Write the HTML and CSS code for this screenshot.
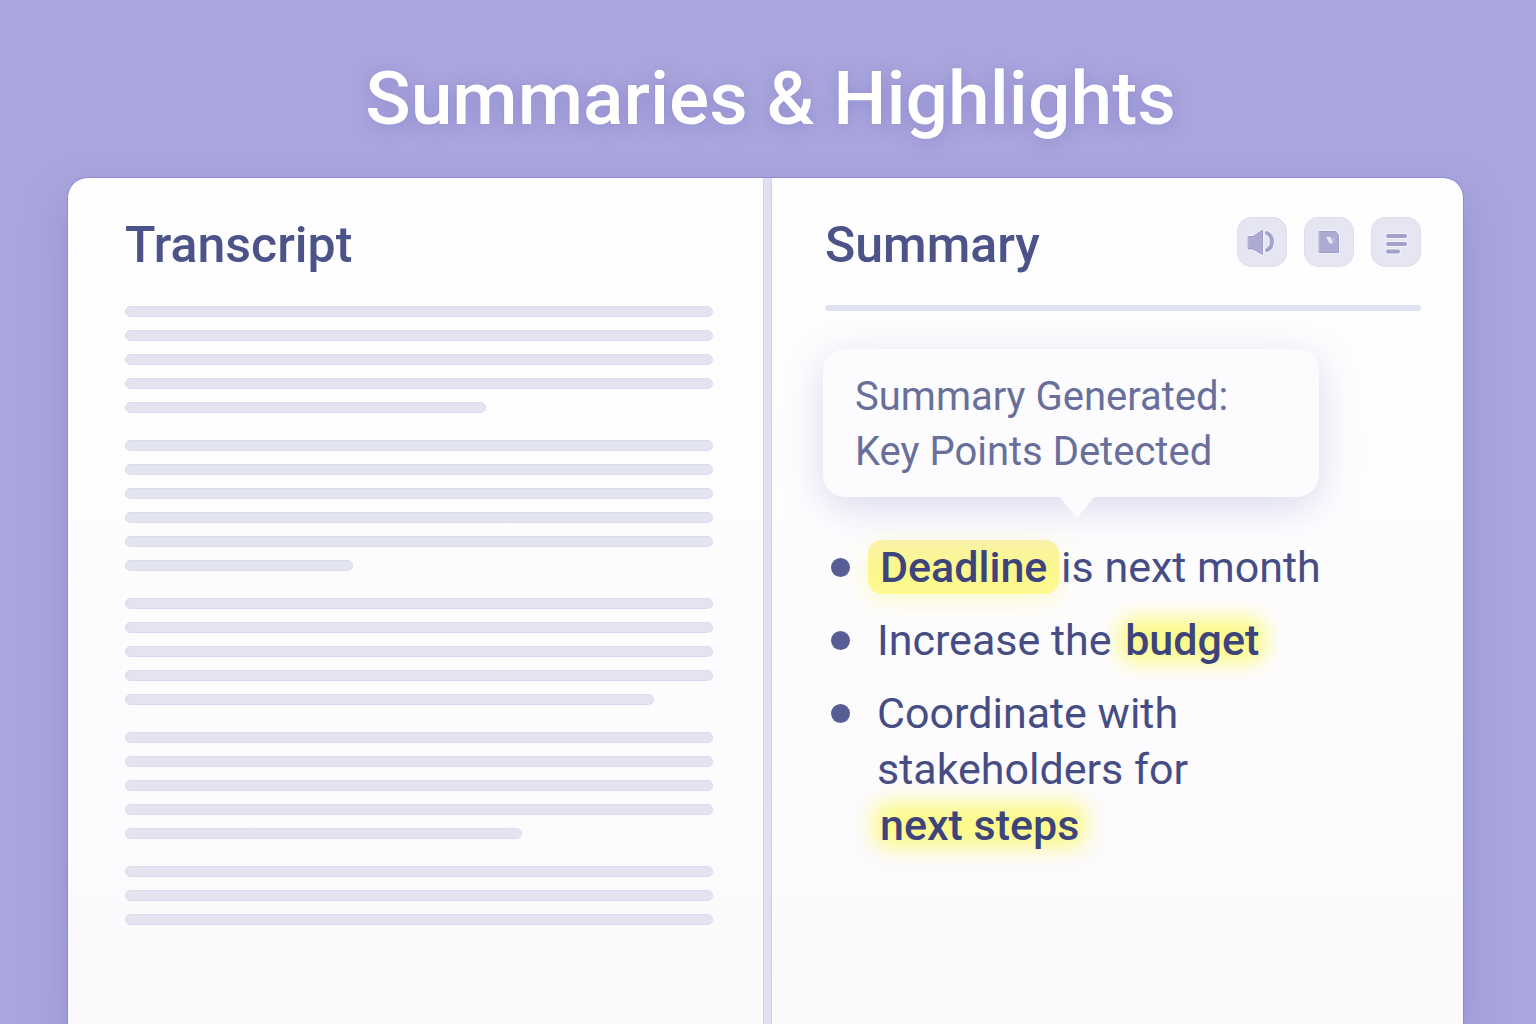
FILE: index.html
```html
<!DOCTYPE html>
<html lang="en">
<head>
<meta charset="utf-8">
<meta name="viewport" content="width=device-width, initial-scale=1">
<title>Summaries &amp; Highlights</title>
<link rel="stylesheet" href="styles.css">
</head>
<body>
<header class="page-header"><h1 class="page-title">Summaries &amp; Highlights</h1></header>
<main class="panel">
  <section class="column transcript" aria-labelledby="transcript-title">
    <div class="column-head"><h2 class="column-title" id="transcript-title">Transcript</h2></div>
    <div class="paragraphs" aria-hidden="true">
      <div class="paragraph"><span class="line"></span><span class="line"></span><span class="line"></span><span class="line"></span><span class="line" style="width:61.4%"></span></div>
      <div class="paragraph"><span class="line"></span><span class="line"></span><span class="line"></span><span class="line"></span><span class="line"></span><span class="line" style="width:38.8%"></span></div>
      <div class="paragraph"><span class="line"></span><span class="line"></span><span class="line"></span><span class="line"></span><span class="line" style="width:90%"></span></div>
      <div class="paragraph"><span class="line"></span><span class="line"></span><span class="line"></span><span class="line"></span><span class="line" style="width:67.5%"></span></div>
      <div class="paragraph"><span class="line"></span><span class="line"></span><span class="line"></span></div>
    </div>
  </section>
  <div class="divider"></div>
  <section class="column summary" aria-labelledby="summary-title">
    <div class="column-head">
      <h2 class="column-title" id="summary-title">Summary</h2>
      <div class="actions">
        <button class="action" type="button" aria-label="Listen">
          <svg viewBox="0 0 50 50" width="50" height="50">
            <path class="halo" d="M11.5 19.5H16L25.500 13v24.500L16 32h-4.500z"/>
            <path class="halo-line" d="M30 16c6.500 3 6.500 14 0 17"/>
            <path class="fill" d="M11.5 19.5H16L25.500 13v24.500L16 32h-4.500z"/>
            <path class="curve" d="M30 16c6.500 3 6.500 14 0 17"/>
          </svg>
        </button>
        <button class="action" type="button" aria-label="Open document">
          <svg viewBox="0 0 50 50" width="50" height="50">
            <path class="halo" d="M15.500 14.500H30c3 0 4.500 3 4.500 6.500v14.500h-19z"/>
            <path class="fill" d="M15.500 14.500H30c3 0 4.500 3 4.500 6.500v14.500h-19z"/>
            <path class="shine" d="M22.500 20c4-1 6 1 6 7-3 0-5-3-6-7z"/>
            <path class="shine-soft" d="M29 20c2 1 2 5 1 7z"/>
          </svg>
        </button>
        <button class="action" type="button" aria-label="Show notes">
          <svg viewBox="0 0 50 50" width="50" height="50">
            <path class="halo-line" d="M17 19h17M17 27h17M17 34.500h10"/>
            <path class="bars" d="M17 19h17M17 27h17M17 34.500h10"/>
          </svg>
        </button>
      </div>
    </div>
    <hr class="rule">
    <div class="callout" role="status">Summary Generated:<br>Key Points Detected
      <svg class="callout-tip" viewBox="0 0 36 22" width="36" height="22" aria-hidden="true"><path d="M0 0h36L19 21q-1 1-2 0z"/></svg>
    </div>
    <ul class="points">
      <li class="point"><span><mark class="pill">Deadline</mark> is next month</span></li>
      <li class="point"><span>Increase the <mark class="glow">budget</mark></span></li>
      <li class="point"><span>Coordinate with<br>stakeholders for<br><mark class="glow">next steps</mark></span></li>
    </ul>
  </section>
</main>
</body>
</html>
```
FILE: styles.css
```css
* { box-sizing: border-box; }

body {
  margin: 0;
  min-height: 100vh;
  display: flex;
  flex-direction: column;
  font-family: Roboto, "Liberation Sans", sans-serif;
  color: #4b5389;
  background: #a9a6dd;
}

h1, h2, ul { margin: 0; padding: 0; font-weight: 500; }

.page-header { padding: 53px 68px 35px 73px; }

.page-title {
  font-size: 75px;
  line-height: 90px;
  text-align: center;
  color: #fff;
  text-shadow: 0 0 1px #8079c8, 0 3px 18px rgba(94, 84, 176, 0.32);
}

.panel {
  flex: 1;
  display: grid;
  grid-template-columns: minmax(0, 695fr) 9px minmax(0, 691fr);
  margin: 0 73px 0 68px;
  border-radius: 20px 20px 0 0;
  background: linear-gradient(#fefefe, #fefdfe 40%, #fbf9fc);
  box-shadow: 0 0 0 1px #8f88d4, 0 20px 44px rgba(92, 82, 176, 0.28);
}

.column { padding: 39px 50px 98px 57px; }
.summary { padding: 39px 42px 98px 53px; isolation: isolate; }

.divider {
  background: #dfe0f1;
  border: solid #d2d4ec;
  border-width: 0 1px;
}

.column-head {
  display: flex;
  justify-content: space-between;
  align-items: flex-start;
  height: 56px;
  margin-bottom: 33px;
}

.summary .column-head { margin-bottom: 32px; }

.column-title { font-size: 50px; line-height: 56px; }

.paragraphs { display: flex; flex-direction: column; gap: 27px; }
.paragraph { display: flex; flex-direction: column; gap: 13px; }

.line {
  height: 11px;
  border-radius: 6px;
  background: #e4e4f1;
  border: 1px solid #dadbf0;
}

.actions { display: flex; gap: 17px; }

.action {
  width: 50px;
  height: 50px;
  padding: 0;
  border: 0;
  border-radius: 15px;
  background: #e6e6f3;
  box-shadow: inset 0 0 0 1px #dddef1;
}

.action svg { display: block; fill: none; stroke-linecap: round; stroke-linejoin: round; }
.action .fill { fill: #acacd2; stroke: #9d9dca; stroke-width: 1; }
.action .halo { stroke: #f3f3fb; stroke-width: 3; }
.action .halo-line { stroke: #f3f3fb; stroke-width: 6; }
.action .curve { stroke: #a3a3cd; stroke-width: 4; }
.action .bars { stroke: #a1a1cb; stroke-width: 4; }
.action .shine { fill: #e9e7f2; }
.action .shine-soft { fill: #c6c5df; }

.rule {
  height: 6px;
  margin: 0 0 38px;
  border: 0;
  border-radius: 3px;
  background: #e0e1f1;
}

.callout {
  position: relative;
  width: fit-content;
  margin-left: -2px;
  padding: 20px 91px 18px 32px;
  border-radius: 22px;
  background: #fcfcfe;
  color: #686f9b;
  font-size: 40px;
  line-height: 55px;
  box-shadow: 0 10px 40px rgba(110, 115, 200, 0.26);
}

.callout-tip {
  position: absolute;
  top: 100%;
  left: 236px;
  margin-top: -1px;
  fill: #fcfcfe;
}

.points {
  display: flex;
  flex-direction: column;
  gap: 17px;
  margin-top: 42px;
  padding-left: 6px;
  list-style: none;
  color: #454d84;
  font-size: 43px;
  font-weight: 400;
  line-height: 56px;
}

.point { display: flex; gap: 27px; }

.point::before {
  content: "";
  flex: none;
  width: 19px;
  height: 19px;
  margin-top: 19px;
  border-radius: 50%;
  background: #565e95;
}

mark { color: #3c447b; font-weight: 500; background: none; }

.pill {
  padding: 2px 12px;
  margin: 0 -9px;
  border-radius: 14px;
  background: linear-gradient(#f9f2a8, #fbf78e 50%, #fcfa90);
  box-shadow: 0 6px 24px rgba(250, 250, 150, 0.5);
}

.glow { position: relative; padding: 0 3px; }

.glow::before {
  content: "";
  position: absolute;
  z-index: -1;
  inset: 2px -4px;
  border-radius: 16px;
  background: #fcfa8c;
  filter: blur(10px);
}
```
